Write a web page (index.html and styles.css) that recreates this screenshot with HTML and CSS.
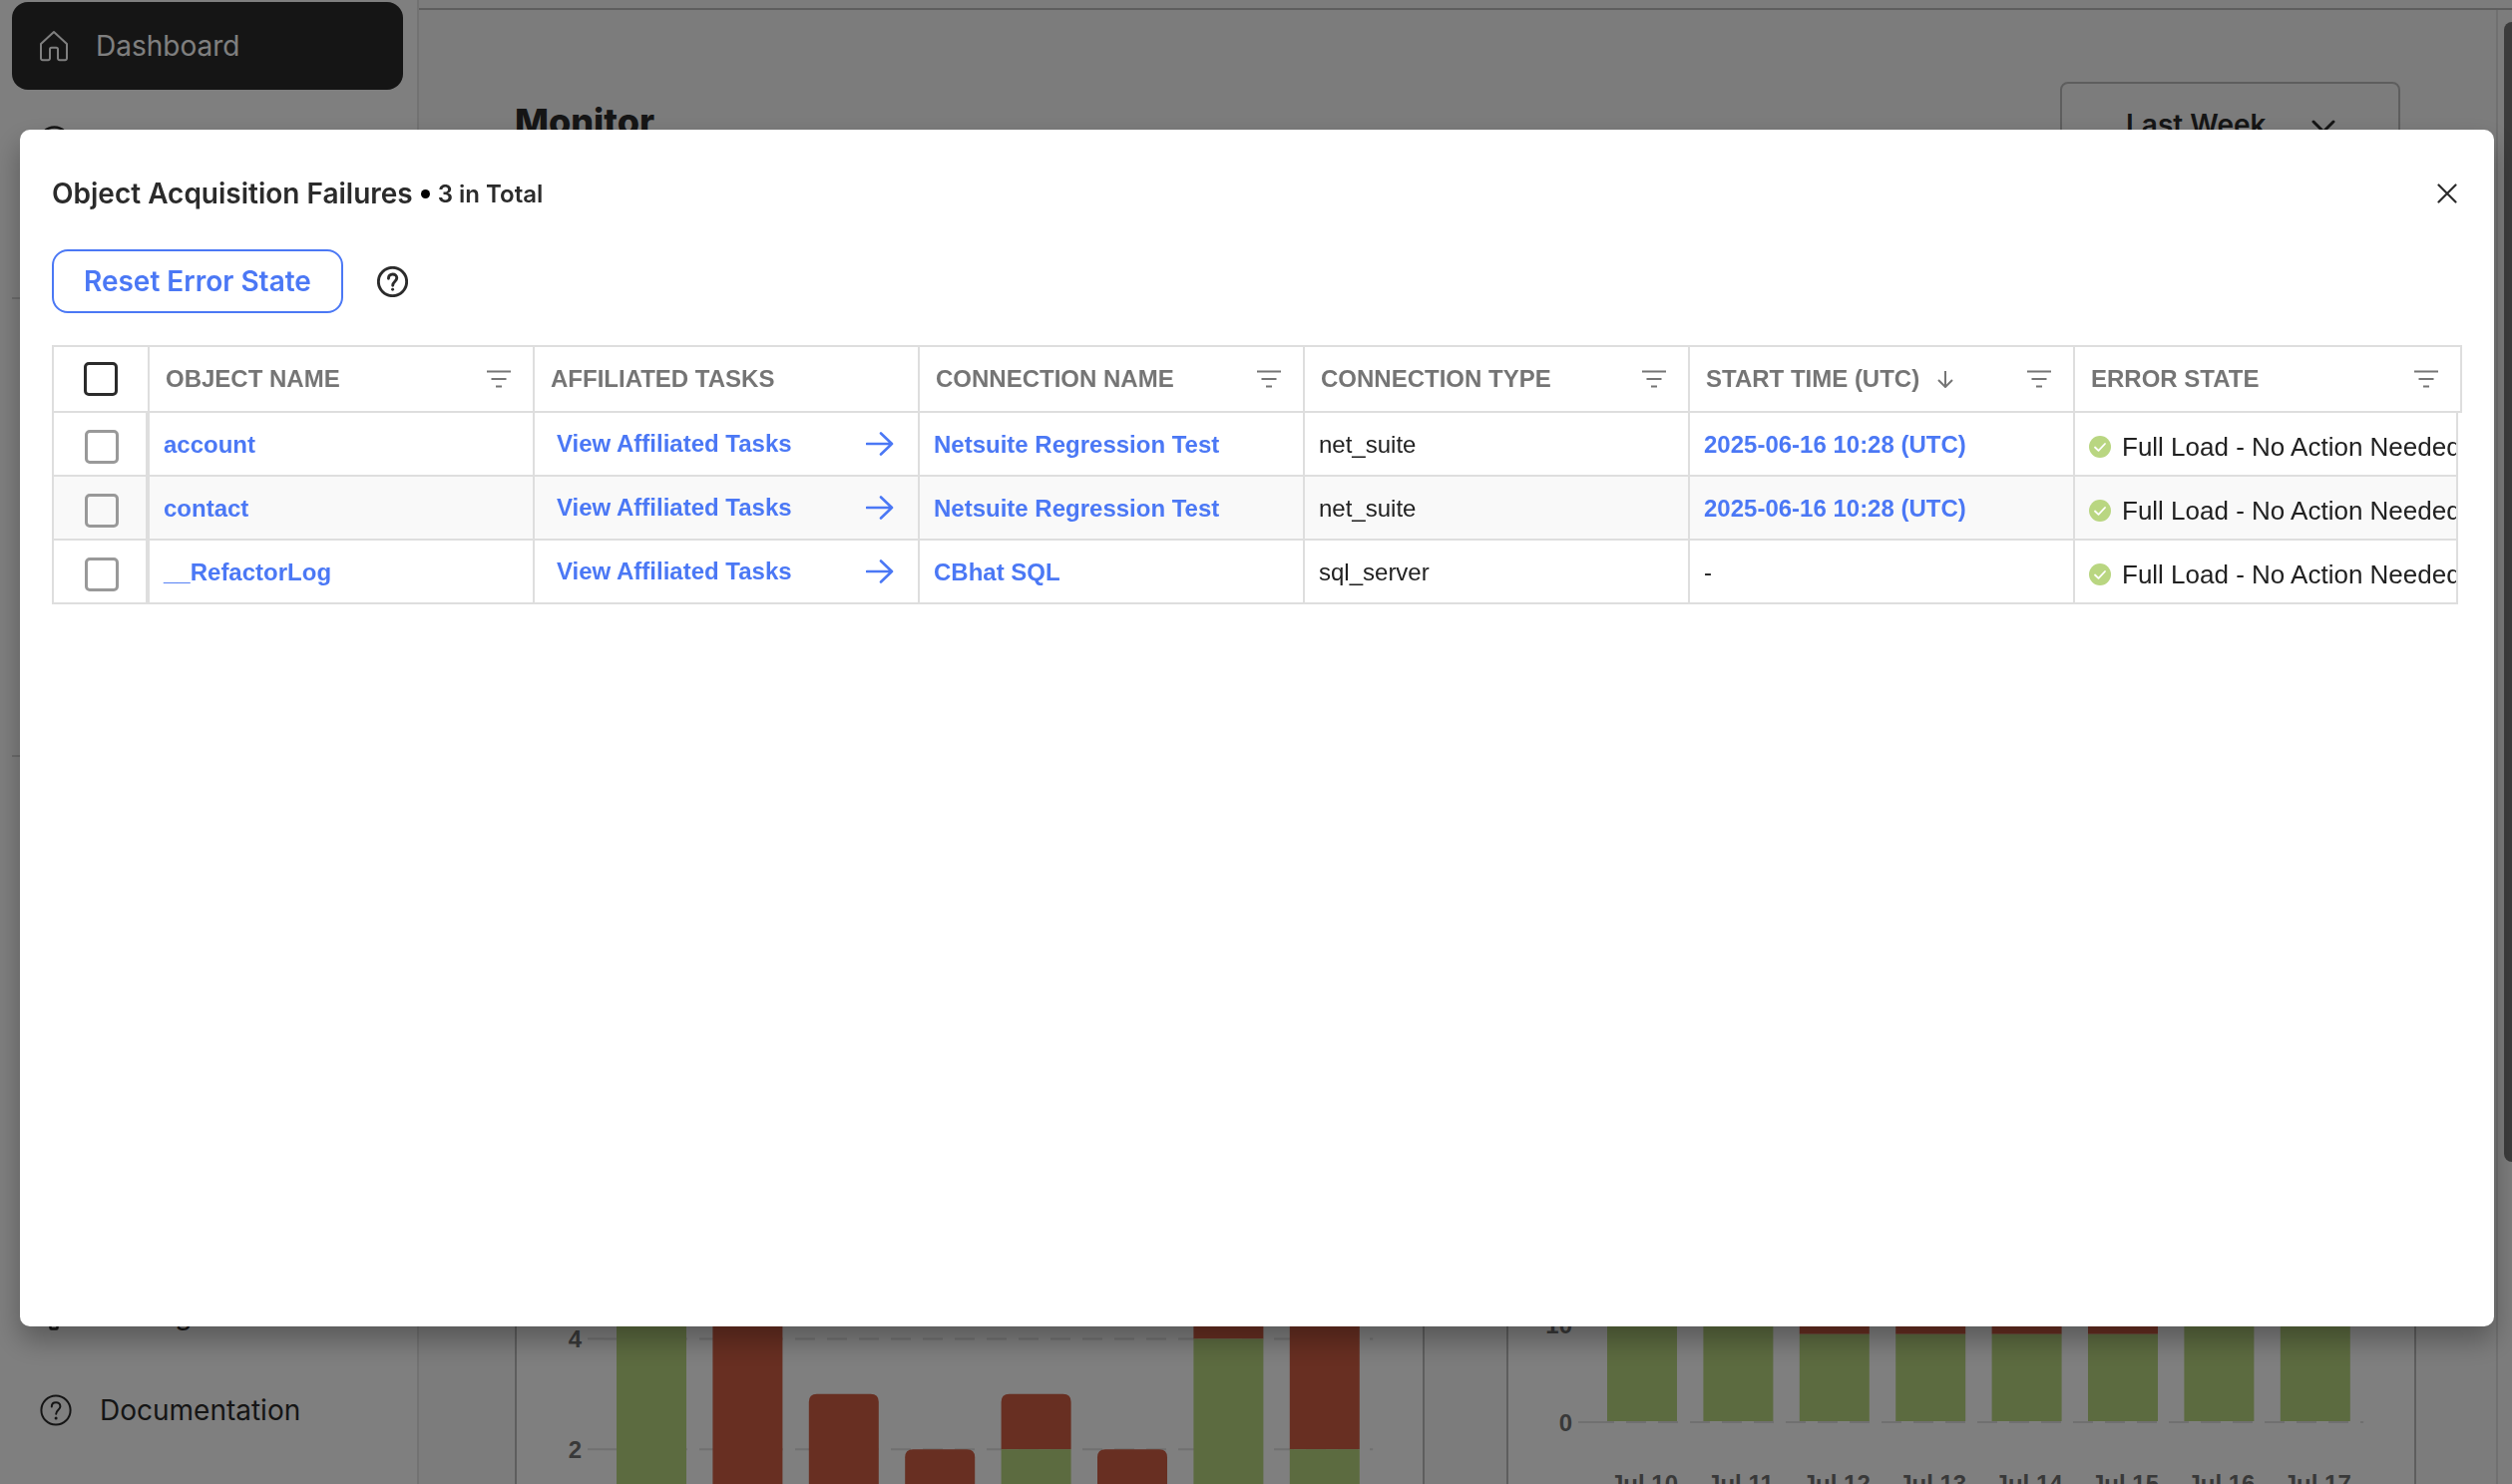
FILE: index.html
```html
<!DOCTYPE html>
<html lang="en">
<head>
    <meta charset="UTF-8">
    <meta name="viewport" content="width=device-width, initial-scale=1.0">
    <title>Object Acquisition Failures</title>
    <link rel="stylesheet" href="styles.css">
</head>
<body>
    <!-- shared icons -->
    <svg class="sprite" aria-hidden="true">
        <symbol id="filter" viewBox="0 0 24 18">
            <path d="M0 1.5h24M4.5 9h15M9 16.5h6" fill="none" stroke="currentColor" stroke-width="2"/>
        </symbol>
        <symbol id="arrow" viewBox="0 0 28 24">
            <path d="M1 12h25M15 1.5L26 12L15 22.5" fill="none" stroke="currentColor" stroke-width="2.6" stroke-linecap="round" stroke-linejoin="round"/>
        </symbol>
        <symbol id="ok" viewBox="0 0 22 22">
            <circle cx="11" cy="11" r="11" fill="#b9d681"/>
            <path d="M6 11.5l3.5 3.3L16 8" fill="none" stroke="#fff" stroke-width="1.8" stroke-linecap="round" stroke-linejoin="round"/>
        </symbol>
        <symbol id="help" viewBox="0 0 32 32">
            <circle cx="16" cy="16" r="14.6" fill="none" stroke="currentColor"/>
            <path d="M11.8 12.6c0-2.6 1.8-4.4 4.3-4.4s4.3 1.7 4.3 4c0 3.4-4.2 3.8-4.2 7.6" fill="none" stroke="currentColor" stroke-linecap="round"/>
            <circle cx="16.1" cy="24" r="1.5" fill="currentColor" stroke="none"/>
        </symbol>
    </svg>

    <div class="app">
        <aside class="sidebar">
            <nav class="nav-group nav-top">
                <a href="#" class="nav-item active">
                    <svg class="nav-icon" viewBox="0 0 32 32"><path d="M16 2L3 14v14.5a1.8 1.8 0 0 0 1.8 1.8h5.4a1.8 1.8 0 0 0 1.8-1.8v-9a1.8 1.8 0 0 1 1.8-1.8h4.4a1.8 1.8 0 0 1 1.8 1.8v9a1.8 1.8 0 0 0 1.8 1.8h5.4a1.8 1.8 0 0 0 1.8-1.8V14z" fill="none" stroke="currentColor" stroke-width="2" stroke-linejoin="round"/></svg>
                    Dashboard
                </a>
                <a href="#" class="nav-item" aria-label="Connections">
                    <svg class="nav-icon" viewBox="0 0 32 32"><circle cx="14.5" cy="16" r="14.5" fill="none" stroke="currentColor" stroke-width="2.4"/></svg>
                </a>
            </nav>
            <div class="nav-group nav-middle"></div>
            <nav class="nav-group nav-bottom">
                <a href="#" class="nav-item">
                    <svg class="nav-icon" viewBox="0 0 32 32"><circle cx="14" cy="15" r="9" fill="none" stroke="currentColor" stroke-width="2"/><path d="M10.500 22v7.500q0 1 1 1h5q1 0 1-1V22" fill="none" stroke="currentColor" stroke-width="2.500"/></svg>
                    Settings
                </a>
                <a href="#" class="nav-item">
                    <svg class="nav-icon nav-help"><use href="#help"/></svg>
                    Documentation
                </a>
            </nav>
        </aside>

        <div class="page">
            <div class="topbar"></div>
            <div class="scroller">
                <main class="content">
                    <header class="page-header">
                        <h1 class="page-title">Monitor</h1>
                        <div class="range">
                            <select class="range-select" aria-label="Time range">
                                <option>Last Week</option>
                            </select>
                            <svg class="range-chevron" viewBox="0 0 24 14"><path d="M2 2l10 10L22 2" fill="none" stroke="currentColor" stroke-width="3" stroke-linecap="round" stroke-linejoin="round"/></svg>
                        </div>
                    </header>
                    <section class="charts">
                        <div class="card"><svg class="chart" id="chartLeft" viewBox="0 0 908 686"></svg></div>
                        <div class="card"><svg class="chart" id="chartRight" viewBox="0 0 908 686"></svg></div>
                    </section>
                </main>
                <div class="track"><div class="thumb"></div></div>
            </div>
        </div>
    </div>

    <div class="overlay">
        <div class="modal" role="dialog" aria-modal="true" aria-labelledby="modalTitle">
            <div class="modal-header">
                <h2 class="modal-title" id="modalTitle">Object Acquisition Failures</h2>
                <span class="dot"></span>
                <span class="modal-count">3 in Total</span>
                <button class="close-btn" aria-label="Close">
                    <svg viewBox="0 0 20 20"><path d="M1.5 1.5l17 17M18.5 1.5l-17 17" fill="none" stroke="currentColor" stroke-width="2.2" stroke-linecap="round"/></svg>
                </button>
            </div>

            <div class="actions">
                <button class="reset-btn">Reset Error State</button>
                <button class="help-btn" aria-label="Help"><svg><use href="#help"/></svg></button>
            </div>

            <table class="grid">
                <thead>
                    <tr>
                        <th class="check"><input type="checkbox" aria-label="Select all"></th>
                        <th>OBJECT NAME <svg class="filter"><use href="#filter"/></svg></th>
                        <th>AFFILIATED TASKS</th>
                        <th>CONNECTION NAME <svg class="filter"><use href="#filter"/></svg></th>
                        <th>CONNECTION TYPE <svg class="filter"><use href="#filter"/></svg></th>
                        <th>START TIME (UTC)
                            <svg class="sort" viewBox="0 0 16 18"><path d="M8 1v16M1 10l7 7l7-7" fill="none" stroke="currentColor" stroke-width="2"/></svg>
                            <svg class="filter"><use href="#filter"/></svg>
                        </th>
                        <th>ERROR STATE <svg class="filter"><use href="#filter"/></svg></th>
                    </tr>
                </thead>
                <tbody>
                    <tr>
                        <td class="check"><input type="checkbox" aria-label="Select account"></td>
                        <td><a href="#">account</a></td>
                        <td class="tasks"><a href="#">View Affiliated Tasks <svg><use href="#arrow"/></svg></a></td>
                        <td><a href="#">Netsuite Regression Test</a></td>
                        <td>net_suite</td>
                        <td><a href="#">2025-06-16 10:28 (UTC)</a></td>
                        <td class="state"><svg><use href="#ok"/></svg>Full Load - No Action Needed</td>
                    </tr>
                    <tr>
                        <td class="check"><input type="checkbox" aria-label="Select contact"></td>
                        <td><a href="#">contact</a></td>
                        <td class="tasks"><a href="#">View Affiliated Tasks <svg><use href="#arrow"/></svg></a></td>
                        <td><a href="#">Netsuite Regression Test</a></td>
                        <td>net_suite</td>
                        <td><a href="#">2025-06-16 10:28 (UTC)</a></td>
                        <td class="state"><svg><use href="#ok"/></svg>Full Load - No Action Needed</td>
                    </tr>
                    <tr>
                        <td class="check"><input type="checkbox" aria-label="Select __RefactorLog"></td>
                        <td><a href="#">__RefactorLog</a></td>
                        <td class="tasks"><a href="#">View Affiliated Tasks <svg><use href="#arrow"/></svg></a></td>
                        <td><a href="#">CBhat SQL</a></td>
                        <td>sql_server</td>
                        <td>-</td>
                        <td class="state"><svg><use href="#ok"/></svg>Full Load - No Action Needed</td>
                    </tr>
                </tbody>
            </table>
        </div>
    </div>

    <script src="charts.js"></script>
</body>
</html>
```

FILE: styles.css
```css
* {
    margin: 0;
    padding: 0;
    box-sizing: border-box;
}

body {
    font-family: Inter, "Liberation Sans", sans-serif;
    font-size: 28px;
    color: #2b2b2b;
    background: #fff;
    height: 100vh;
    overflow: hidden;
}

a {
    text-decoration: none;
}

button {
    font-family: inherit;
    background: none;
    border: none;
    cursor: pointer;
}

.sprite {
    display: none;
}

/* page behind the dialog */

.app {
    display: flex;
    height: 100vh;
}

.sidebar {
    width: 420px;
    flex-shrink: 0;
    display: flex;
    flex-direction: column;
    padding: 2px 14px 30px 12px;
    border-right: 2px solid #e4e4e4;
}

.nav-group {
    display: flex;
    flex-direction: column;
    gap: 8px;
}

.nav-top {
    min-height: 296px;
}

.nav-middle {
    min-height: 461px;
    border-top: 2px solid #d8d8d8;
    border-bottom: 2px solid #d8d8d8;
}

.nav-bottom {
    margin-top: auto;
}

.nav-item {
    display: flex;
    align-items: center;
    gap: 28px;
    height: 88px;
    padding: 0 28px;
    border-radius: 16px;
    color: #2b2b2b;
}

.nav-item.active {
    background: #2b2b2b;
    color: #fff;
    gap: 26px;
    padding: 0 26px;
}

.nav-icon {
    width: 32px;
    height: 32px;
}

.nav-help {
    stroke-width: 2;
}

.page {
    flex: 1;
    min-width: 0;
    display: flex;
    flex-direction: column;
    background: #f8f8f8;
}

.topbar {
    height: 10px;
    flex-shrink: 0;
    border-bottom: 2px solid #bcbcbc;
}

.scroller {
    flex: 1;
    display: flex;
    min-height: 0;
}

.content {
    flex: 1;
    display: flex;
    flex-direction: column;
    padding: 72px 80px 0 96px;
}

.page-header {
    display: flex;
    justify-content: space-between;
    padding-right: 16px;
}

.page-title {
    font-size: 36px;
    line-height: 80px;
    font-weight: 800;
}

.range {
    position: relative;
}

.range-select {
    appearance: none;
    width: 341px;
    height: 86px;
    padding: 0 64px;
    font-family: inherit;
    font-size: 28px;
    font-weight: 600;
    color: #2b2b2b;
    background: transparent;
    border: 2px solid #bcbcbc;
    border-radius: 8px;
}

.range-chevron {
    position: absolute;
    right: 65px;
    top: 38px;
    width: 24px;
    height: 14px;
    pointer-events: none;
}

.charts {
    margin-top: auto;
    display: grid;
    grid-template-columns: 1fr 1fr;
    gap: 82px;
}

.card {
    background: #fff;
    border: 2px solid #bcbcbc;
    border-bottom: none;
    border-radius: 8px 8px 0 0;
}

.chart {
    display: block;
    width: 100%;
}

.chart text {
    font: bold 24px "Liberation Sans", Arial, sans-serif;
    fill: #737373;
}

.chart line {
    stroke: #e0e0e0;
    stroke-width: 2;
}

.bar-ok {
    fill: #b9d681;
}

.bar-fail {
    fill: #d05e44;
}

.track {
    width: 16px;
    padding: 12px 0 0 6px;
    border-left: 2px solid #e0e0e0;
}

.thumb {
    height: 78%;
    background: #787878;
    border-radius: 8px 0 0 8px;
}

/* dialog */

.overlay {
    position: fixed;
    inset: 0;
    display: flex;
    padding: 130px 18px 158px 20px;
    background: rgba(0, 0, 0, 0.5);
}

.modal {
    flex: 1;
    min-width: 0;
    padding: 44px 32px;
    background: #fff;
    border-radius: 10px;
    box-shadow: 0 14px 28px rgba(0, 0, 0, 0.3);
}

.modal-header {
    display: flex;
    align-items: center;
    height: 40px;
    margin-bottom: 36px;
}

.modal-title {
    font-size: 28px;
    font-weight: 600;
}

.dot {
    width: 9px;
    height: 9px;
    margin: 0 8px;
    border-radius: 50%;
    background: #000;
}

.modal-count {
    font-size: 24px;
    font-weight: 600;
}

.close-btn {
    display: flex;
    margin-left: auto;
    padding: 5px;
    color: #2b2b2b;
}

.close-btn svg {
    width: 20px;
    height: 20px;
}

.actions {
    display: flex;
    align-items: center;
    gap: 34px;
    margin-bottom: 32px;
}

.reset-btn {
    height: 64px;
    padding: 0 30px;
    font-size: 28px;
    font-weight: 600;
    color: #4b78f5;
    border: 2px solid #4b78f5;
    border-radius: 16px;
}

.help-btn {
    display: flex;
    color: #2b2b2b;
}

.help-btn svg {
    width: 31px;
    height: 31px;
    stroke-width: 3;
}

/* failures table */

.grid {
    display: block;
    font-family: "Liberation Sans", Arial, sans-serif;
    font-size: 24px;
    color: #212121;
}

.grid thead,
.grid tbody {
    display: block;
}

.grid thead {
    border-top: 2px solid #dedede;
}

.grid tbody {
    margin-right: 4px;
}

.grid tr {
    display: grid;
    grid-template-columns: 96px repeat(5, 386px) minmax(0, 1fr);
    border-left: 2px solid #dedede;
    border-bottom: 2px solid #dedede;
    height: 64px;
}

.grid thead tr {
    height: 66px;
}

.grid tbody tr:nth-child(even) {
    background: #f9f9f9;
}

.grid th,
.grid td {
    display: flex;
    align-items: center;
    min-width: 0;
    overflow: hidden;
    white-space: nowrap;
    border-right: 2px solid #dedede;
}

.grid th {
    padding: 0 22px 0 16px;
    color: #757575;
    text-align: left;
}

.grid td {
    padding: 1px 14px 0;
}

.grid a {
    color: #4b78f5;
    font-weight: bold;
}

.grid .check {
    justify-content: center;
    padding: 0;
}

.grid td.check {
    padding: 6px 0 0 4px;
    border-right-width: 4px;
}

.grid input {
    appearance: none;
    width: 34px;
    height: 34px;
    border: 3px solid #999;
    border-radius: 5px;
}

.grid th input {
    border-color: #2b2b2b;
}

.filter {
    width: 24px;
    height: 18px;
    margin-left: auto;
}

.sort {
    width: 16px;
    height: 18px;
    margin-left: 18px;
}

.grid td.tasks {
    padding: 0 24px 0 22px;
}

.tasks a {
    flex: 1;
    display: flex;
    align-items: center;
    justify-content: space-between;
}

.tasks svg {
    width: 28px;
    height: 24px;
}

.grid td.state {
    gap: 11px;
    padding: 6px 0 0 14px;
    font-size: 26px;
}

.state svg {
    width: 22px;
    height: 22px;
    flex-shrink: 0;
}
```

FILE: charts.js
```js
// each bar is [ok, failed]
function drawChart(id, opts) {
    const svg = document.getElementById(id);
    const band = 96.4;
    const barWidth = 70;
    const radius = 8;
    const y = value => opts.zero - value * opts.unit;
    let out = '';

    opts.ticks.forEach(tick => {
        const ty = y(tick);
        out += `<line x1="${opts.left - 16}" y1="${ty}" x2="${opts.left}" y2="${ty}"/>`;
        out += `<line x1="${opts.left}" y1="${ty}" x2="${opts.left + band * 8}" y2="${ty}" stroke-dasharray="20 12"/>`;
        out += `<text x="${opts.left - 22}" y="${ty + 9}" text-anchor="end">${tick}</text>`;
    });

    opts.bars.forEach(([ok, failed], i) => {
        const x = opts.left + band * i + 13;
        const bottom = y(0) - 1;
        if (failed) {
            const top = y(ok + failed);
            const end = ok ? y(ok) : bottom;
            out += `<path class="bar-fail" d="M${x} ${end}V${top + radius}q0 ${-radius} ${radius} ${-radius}h${barWidth - radius * 2}q${radius} 0 ${radius} ${radius}V${end}z"/>`;
        }
        if (ok) {
            out += `<rect class="bar-ok" x="${x}" y="${y(ok)}" width="${barWidth}" height="${bottom - y(ok)}"/>`;
        }
        if (opts.labels) {
            out += `<text x="${x + barWidth / 2 + 2}" y="${y(0) + 70}" text-anchor="middle">${opts.labels[i]}</text>`;
        }
    });

    svg.innerHTML = out;
}

drawChart('chartLeft', {
    left: 87,
    zero: 762,
    unit: 55.4,
    ticks: [2, 4],
    bars: [[6, 0], [0, 6], [0, 3], [0, 2], [2, 1], [0, 2], [4, 2], [2, 4]]
});

drawChart('chartRight', {
    left: 86,
    zero: 624,
    unit: 9.8,
    ticks: [0, 10],
    bars: [[12, 0], [12, 0], [9, 3], [9, 3], [9, 3], [9, 3], [12, 0], [12, 0]],
    labels: ['Jul 10', 'Jul 11', 'Jul 12', 'Jul 13', 'Jul 14', 'Jul 15', 'Jul 16', 'Jul 17']
});
```
